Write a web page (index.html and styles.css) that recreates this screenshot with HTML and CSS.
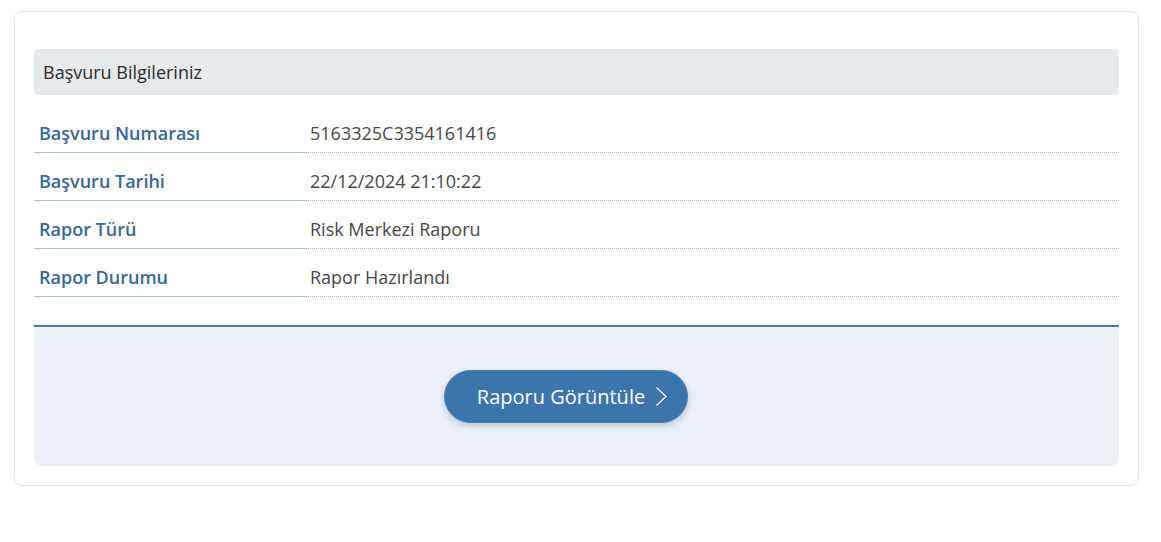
FILE: index.html
```html
<!DOCTYPE html>
<html lang="tr">
<head>
    <meta charset="UTF-8">
    <meta name="viewport" content="width=device-width, initial-scale=1.0">
    <title>Başvuru Bilgileriniz</title>
    <link rel="stylesheet" href="styles.css">
</head>
<body>
    <div class="page">
        <div class="card">
            <div class="card-title">Başvuru Bilgileriniz</div>

            <div class="info-list">
                <div class="info-row">
                    <div class="info-label">Başvuru Numarası</div>
                    <div class="info-value">5163325C3354161416</div>
                </div>
                <div class="info-row">
                    <div class="info-label">Başvuru Tarihi</div>
                    <div class="info-value">22/12/2024 21:10:22</div>
                </div>
                <div class="info-row">
                    <div class="info-label">Rapor Türü</div>
                    <div class="info-value">Risk Merkezi Raporu</div>
                </div>
                <div class="info-row">
                    <div class="info-label">Rapor Durumu</div>
                    <div class="info-value">Rapor Hazırlandı</div>
                </div>
            </div>

            <div class="actions">
                <button class="btn-report">
                    Raporu Görüntüle
                    <svg class="chevron" width="13" height="21" viewBox="0 0 13 21">
                        <path d="M1.5 1.5 L11 10.5 L1.5 19.5" fill="none" stroke="#fff" stroke-width="1.1"/>
                    </svg>
                </button>
            </div>
        </div>
    </div>
</body>
</html>
```

FILE: styles.css
```css
body {
    margin: 0;
    background-color: #fff;
    font-family: 'Open Sans', 'Noto Sans', sans-serif;
    color: #444;
}

.page {
    padding: 11px 22px 40px 14px;
}

.card {
    border: 1px solid #e4e6e8;
    border-radius: 8px;
    padding: 37px 19px 19px 19px;
}

.card-title {
    background-color: #e6e9ec;
    border-radius: 4px;
    height: 46px;
    line-height: 46px;
    padding-left: 9px;
    font-size: 18px;
    color: #2b2b2b;
}

.info-list {
    margin-top: 10px;
}

.info-row {
    display: flex;
}

.info-label {
    width: 267px;
    padding: 16px 0 7px 5px;
    line-height: 24px;
    font-size: 18px;
    font-weight: 600;
    color: #36679a;
    border-bottom: 1px solid #a7bdd3;
}

.info-value {
    flex: 1;
    padding: 16px 0 7px 4px;
    line-height: 24px;
    font-size: 18px;
    color: #474747;
    border-bottom: 1px dotted #a4b0bc;
}

.actions {
    margin-top: 28px;
    border-top: 2px solid #4a7aa4;
    background-color: #ebf0f7;
    border-radius: 0 0 8px 8px;
    padding: 43px 0 43px;
    display: flex;
    justify-content: center;
}

.btn-report {
    display: flex;
    align-items: center;
    gap: 10px;
    height: 53px;
    margin-right: 21px;
    padding: 0 19px 0 32px;
    background-color: #3b75ad;
    color: #fff;
    border: 1px solid #4a82b8;
    border-radius: 27px;
    font-family: 'Open Sans', 'Noto Sans', sans-serif;
    font-size: 20px;
    cursor: pointer;
    box-shadow: 0 3px 6px rgba(40, 70, 110, 0.25);
}

.chevron {
    display: block;
}
```
